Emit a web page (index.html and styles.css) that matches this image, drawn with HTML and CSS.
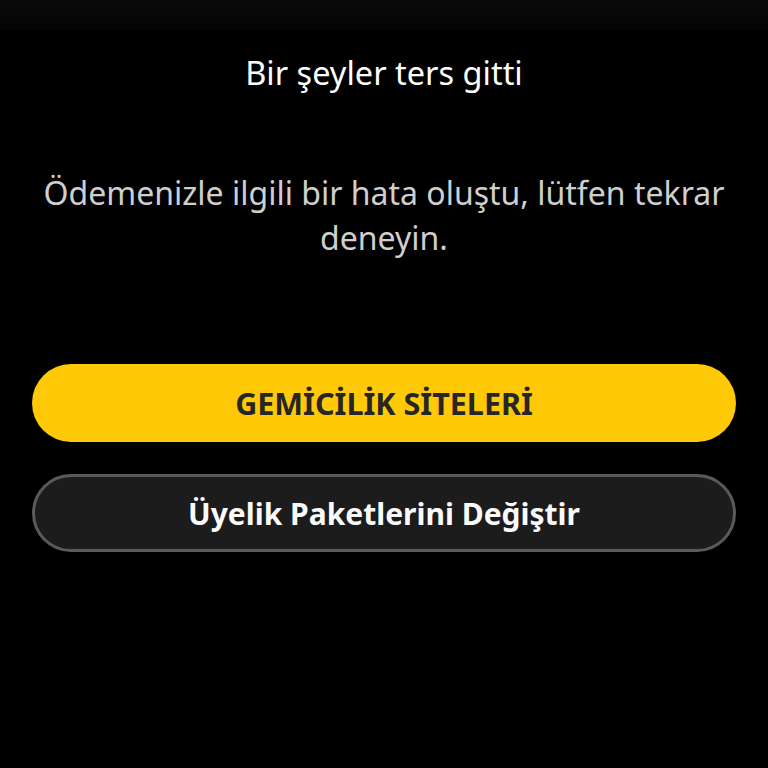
FILE: index.html
```html
<!DOCTYPE html>
<html lang="tr">
<head>
<meta charset="utf-8">
<link rel="stylesheet" href="styles.css">
</head>
<body>
<div class="screen">
  <div class="topbar"></div>
  <h1 class="title">Bir şeyler ters gitti</h1>
  <p class="message">Ödemenizle ilgili bir hata oluştu, lütfen tekrar deneyin.</p>
  <div class="actions">
    <button class="btn btn-primary">GEMİCİLİK SİTELERİ</button>
    <button class="btn btn-secondary">Üyelik Paketlerini Değiştir</button>
  </div>
</div>
</body>
</html>
```
FILE: styles.css
```css
html, body {
  margin: 0;
  padding: 0;
  background: #000;
}
.screen {
  width: 768px;
  height: 768px;
  box-sizing: border-box;
  padding: 0 32px;
  font-family: "Noto Sans", "Open Sans", sans-serif;
  color: #fff;
  display: flex;
  flex-direction: column;
  align-items: stretch;
}
.topbar {
  height: 30px;
  margin: 0 -32px;
  background: linear-gradient(#0b0b0b, #040404);
}
.title {
  margin: 21px 0 0;
  font-size: 32.5px;
  line-height: 44px;
  font-weight: 400;
  text-align: center;
  color: #fff;
}
.message {
  margin: 75px -10px 0;
  padding: 0;
  font-size: 32px;
  line-height: 45px;
  text-align: center;
  color: #cfcfcf;
}
.actions {
  margin-top: 104px;
  display: flex;
  flex-direction: column;
  gap: 32px;
}
.btn {
  height: 78px;
  border-radius: 39px;
  font-family: "Noto Sans", "Open Sans", sans-serif;
  font-weight: 700;
  font-size: 30.5px;
  cursor: pointer;
}
.btn-primary {
  background: #ffc907;
  border: none;
  color: #262626;
}
.btn-secondary {
  background: #1c1c1c;
  border: 3px solid #5a5a5a;
  color: #fafafa;
  font-size: 30px;
}
```
